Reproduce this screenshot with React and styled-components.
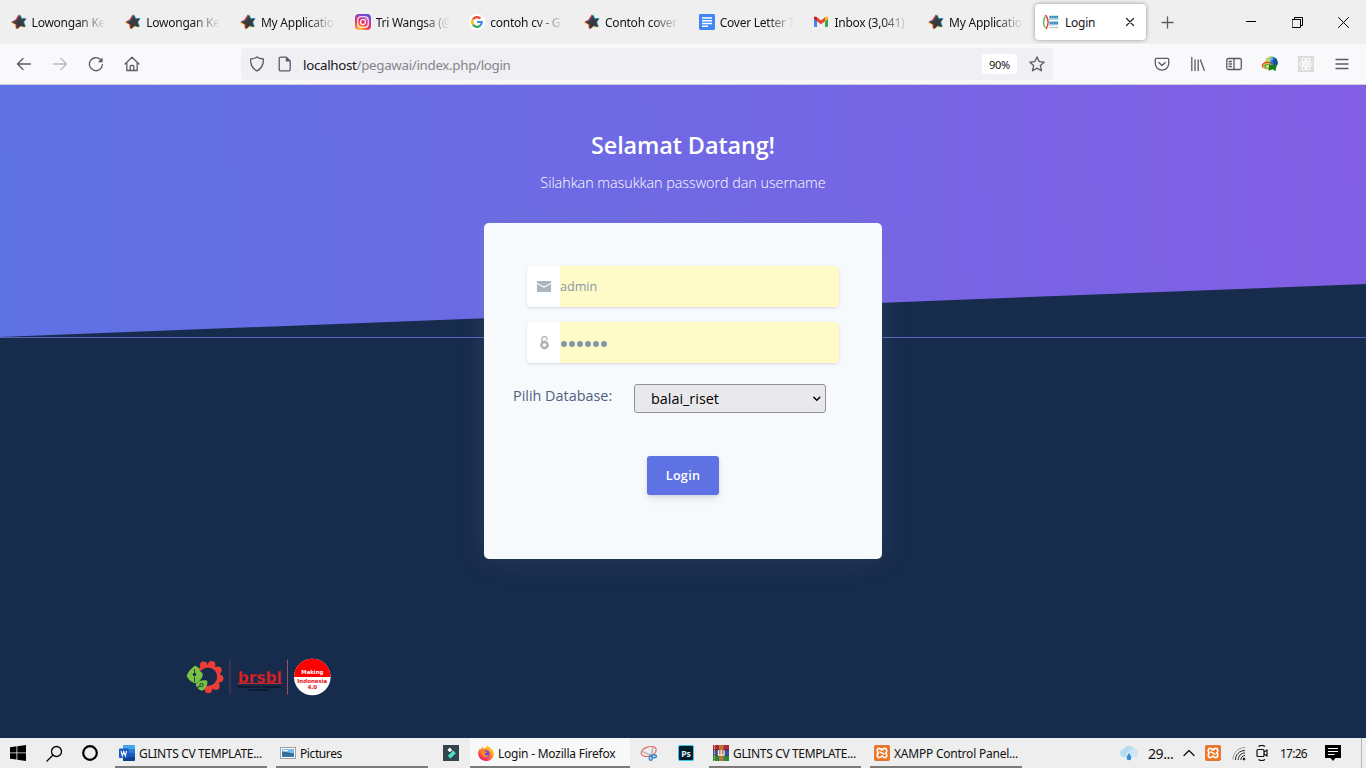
import React from 'react';
import styled, { createGlobalStyle, css } from 'styled-components';

const Global = createGlobalStyle`
  * { box-sizing: border-box; }
  body { margin: 0; overflow: hidden; background: #172b4d; font-family: "Open Sans", "Noto Sans", sans-serif; }
  svg { display: block; flex: none; }
`;

const ui = '"Noto Sans", "Open Sans", sans-serif';

const Screen = styled.div`
  width: 1366px;
  height: 768px;
  display: flex;
  flex-direction: column;
`;

/* ---------- browser chrome ---------- */

const TabBar = styled.div`
  height: 44px;
  flex: none;
  display: flex;
  align-items: center;
  background: #efefef;
  font-family: ${ui};
  font-size: 12px;
  color: #15141a;
`;

const Tab = styled.div`
  width: 114.7px;
  flex: none;
  height: 36px;
  display: flex;
  align-items: center;
  gap: 5px;
  padding-left: 10.6px;
`;

const TabLabel = styled.span`
  width: 86px;
  white-space: nowrap;
  line-height: 18px;
  padding-top: 1px;
  letter-spacing: ${(p) => p.$spacing || 0}px;
  mask-image: linear-gradient(to right, #000 56%, transparent 89%);
`;

const ActiveTab = styled(Tab)`
  width: 111px;
  margin-left: 2.7px;
  padding: 0 10px 0 8px;
  gap: 6px;
  background: #fff;
  border-radius: 4px;
  box-shadow: 0 0 4px rgba(0, 0, 0, 0.38);
`;

const ActiveLabel = styled.span`
  flex: 1;
  line-height: 18px;
  padding-top: 1px;
  letter-spacing: -0.2px;
`;

const WindowButton = styled.div`
  width: ${(p) => p.$w || 46}px;
  height: 44px;
  display: grid;
  place-items: center;
`;

const Spacer = styled.div`
  flex: 1;
`;

const Toolbar = styled.div`
  height: 41px;
  flex: none;
  display: flex;
  align-items: center;
  padding: 0 6px;
  background: #f9f9fb;
  border-bottom: 1px solid #ccccd2;
`;

const ToolButton = styled.div`
  width: 36px;
  height: 32px;
  display: grid;
  place-items: center;
  opacity: ${(p) => (p.$dim ? 0.4 : 1)};
`;

const AddressBar = styled.div`
  width: 812px;
  height: 32px;
  margin-left: 91px;
  display: flex;
  align-items: center;
  padding: 0 8px;
  background: #f0eff4;
  border-radius: 4px;
  font-family: ${ui};
`;

const PageInfo = styled.span`
  margin-left: 12px;
`;

const Url = styled.div`
  flex: 1;
  margin-left: 10px;
  padding-top: 1px;
  font-size: 13.33px;
  line-height: 20px;
  letter-spacing: -0.31px;
  color: #85848b;
  b { font-weight: 400; color: #15141a; }
`;

const ZoomBadge = styled.div`
  width: 35px;
  height: 20px;
  margin-right: 12px;
  display: grid;
  place-items: center;
  background: #fff;
  border-radius: 3px;
  font-size: 11px;
  letter-spacing: -0.3px;
  color: #15141a;
`;

/* ---------- login page ---------- */

const Page = styled.main`
  flex: 1;
  min-height: 0;
  display: flex;
  flex-direction: column;
  align-items: center;
  background: #172b4d;
`;

const Hero = styled.header`
  position: relative;
  width: 100%;
  height: 253px;
  flex: none;
  margin-bottom: -115px;
  padding-top: 43px;
  text-align: center;
  color: #fff;
  border-bottom: 1px solid #5960b8;
  &::before {
    content: "";
    position: absolute;
    inset: 0;
    background: linear-gradient(87deg, #5e72e4 0, #825ee4 100%);
    clip-path: polygon(0 0, 100% 0, 100% 199px, 0 100%);
  }
`;

const Title = styled.h1`
  position: relative;
  margin: 0;
  font-size: 23.4px;
  line-height: 34px;
  font-weight: 600;
  letter-spacing: -0.1px;
`;

const Lead = styled.p`
  position: relative;
  margin: 9px 0 0;
  font-size: 14.4px;
  line-height: 24px;
  font-weight: 300;
  letter-spacing: -0.04px;
  color: #fff;
`;

const Card = styled.form`
  position: relative;
  width: 398px;
  height: 336px;
  flex: none;
  display: flex;
  flex-direction: column;
  padding: 43px 43px 0;
  background: #f7fafc;
  border-radius: 5px;
  box-shadow: 0 0 29px rgba(136, 152, 170, 0.15);
`;

const Field = styled.div`
  height: 41px;
  margin-bottom: 15px;
  display: flex;
  border-radius: 4px;
  overflow: hidden;
  box-shadow: 0 1px 3px rgba(50, 50, 93, 0.18);
`;

const FieldIcon = styled.div`
  width: 33px;
  padding-left: 1px;
  display: grid;
  place-items: center;
  background: #fff;
`;

const FieldValue = styled.div`
  flex: 1;
  display: flex;
  align-items: center;
  gap: 2px;
  background: #fffbc8;
  font-size: 12.6px;
  color: #8898aa;
`;

const Dot = styled.i`
  width: 6px;
  height: 6px;
  margin: 2px -1px 0 1px;
  border-radius: 50%;
  background: #8898aa;
`;

const DatabaseRow = styled.div`
  display: flex;
  align-items: flex-start;
  margin: 6px -30px 0 -14px;
  font-size: 14.4px;
`;

const DatabaseLabel = styled.label`
  width: 121px;
  line-height: 24px;
  color: #525f7f;
`;

const Select = styled.div`
  width: 192px;
  height: 29px;
  display: flex;
  align-items: center;
  justify-content: space-between;
  padding: 0 4px 0 16px;
  color: #000;
  background: #e9e9ed;
  border: 1px solid #8f8f9d;
  border-radius: 3px;
`;

const LoginButton = styled.button`
  align-self: center;
  width: 72px;
  height: 39px;
  margin-top: 43px;
  padding: 0;
  border: 0;
  border-radius: 3px;
  background: #5e72e4;
  color: #fff;
  font: 600 12.6px "Open Sans", sans-serif;
  letter-spacing: 0.3px;
  box-shadow: 0 4px 6px rgba(50, 50, 93, 0.11), 0 1px 3px rgba(0, 0, 0, 0.08);
`;

const Footer = styled.footer`
  align-self: flex-start;
  margin: 99px 0 0 186px;
`;

/* ---------- taskbar ---------- */

const Taskbar = styled.div`
  height: 30px;
  flex: none;
  display: flex;
  align-items: center;
  background: #eee;
  font-family: ${ui};
  font-size: 12px;
  color: #111;
`;

const TaskIcon = styled.div`
  width: ${(p) => p.$w || 36}px;
  display: grid;
  place-items: center;
`;

const Task = styled.div`
  width: ${(p) => p.$w || 152}px;
  height: 30px;
  margin-left: ${(p) => p.$gap || 0}px;
  display: flex;
  align-items: center;
  gap: 4px;
  padding-left: ${(p) => p.$pad || 4}px;
  white-space: nowrap;
  letter-spacing: ${(p) => p.$spacing || 0}px;
  border-bottom: 2px solid #7b7b7b;
  border-top: 2px solid transparent;
  ${(p) => p.$active && css`background: #f8f8f8;`}
`;

const Weather = styled.span`
  width: 35px;
  padding-left: 9px;
  font-size: 14px;
  letter-spacing: -0.4px;
`;

const Clock = styled.span`
  width: 46px;
  padding-left: 12px;
  font-size: 12px;
  letter-spacing: -0.75px;
`;

const DesktopEdge = styled.div`
  width: 5px;
  height: 30px;
  margin-left: 9px;
  border-left: 1px solid #b5b5b5;
`;

/* ---------- drawings ---------- */

const Line = ({ size = 16, children, color = '#5b5b66', w = 1.3, vb = 16 }) => (
  <svg width={size} height={size} viewBox={`0 0 ${vb} ${vb}`} fill="none" stroke={color} strokeWidth={w} strokeLinecap="round" strokeLinejoin="round">
    {children}
  </svg>
);

const starPoints = '8.6,0.8 10.5,4.8 15,4.5 12.5,8.3 14.3,13 9.6,12 5.8,15.2 5.3,10.4 1,8.3 5.4,6';
const Star = () => (
  <svg width="16" height="16" viewBox="0 0 16 16">
    <polygon points={starPoints} fill="#ffd51f" transform="translate(-.7 .6)" />
    <polygon points={starPoints} fill="#ee2b36" transform="translate(-.9 -.4)" />
    <polygon points={starPoints} fill="#12b5e5" transform="translate(.6 -.5)" />
    <polygon points={starPoints} fill="#3b3a3e" stroke="#3b3a3e" strokeWidth=".5" transform="translate(.8 .8) scale(.92)" />
  </svg>
);

const Instagram = () => (
  <svg width="16" height="16" viewBox="0 0 16 16">
    <defs>
      <radialGradient id="ig" cx=".28" cy="1.05" r="1.1">
        <stop offset="0" stopColor="#fd5" /><stop offset=".25" stopColor="#fb8a3c" />
        <stop offset=".55" stopColor="#e8355f" /><stop offset=".8" stopColor="#b936b4" /><stop offset="1" stopColor="#5a4fdc" />
      </radialGradient>
    </defs>
    <rect width="16" height="16" rx="4" fill="url(#ig)" />
    <rect x="2.8" y="2.8" width="10.4" height="10.4" rx="3" fill="none" stroke="#fff" strokeWidth="1.1" />
    <circle cx="8" cy="8" r="2.5" fill="none" stroke="#fff" strokeWidth="1.1" />
    <circle cx="11" cy="5" r=".7" fill="#fff" />
  </svg>
);

const Google = () => (
  <svg width="16" height="16" viewBox="0 0 16 16">
    <circle cx="8" cy="8" r="8" fill="#fff" />
    <g fill="none" strokeWidth="2.2">
      <path d="M4 5.3A4.8 4.8 0 0 1 11.4 4.6" stroke="#ea4335" />
      <path d="M4 5.3a4.8 4.8 0 0 0 0 5.4" stroke="#fbbc05" />
      <path d="M4 10.7a4.8 4.8 0 0 0 7.2.9" stroke="#34a853" />
      <path d="M8 8h4.8a4.8 4.8 0 0 1-1.6 3.6" stroke="#4285f4" />
    </g>
  </svg>
);

const Docs = () => (
  <svg width="16" height="16" viewBox="0 0 16 16">
    <rect width="16" height="16" rx="1.4" fill="#4285f4" />
    <path d="M3 4h10M3 6.8h10M3 9.5h10M3 12.2h6" stroke="#fff" strokeWidth="1.4" />
  </svg>
);

const Gmail = () => (
  <svg width="16" height="16" viewBox="0 0 16 16">
    <path d="M1 4l3 2v7H2a1 1 0 0 1-1-1z" fill="#4285f4" />
    <path d="M12 6l3-2v8a1 1 0 0 1-1 1h-2z" fill="#34a853" />
    <path d="M4 3.2L8 6.4l4-3.2v4L8 10.2 4 7.2z" fill="#ea4335" />
    <path d="M1 4c0-1.8 1.8-2 3-.8v4L1 5z" fill="#c5221f" />
    <path d="M15 4c0-1.8-1.8-2-3-.8v4L15 5z" fill="#fbbc04" />
  </svg>
);

const SiteIcon = () => (
  <svg width="16" height="16" viewBox="0 0 16 16">
    <path d="M2.2 2.8C.9 4.5.6 6 .6 8s.4 4 1.8 5.5" fill="none" stroke="#5cb85c" strokeWidth="1.4" />
    <path d="M2.3 1C4.300 3 5.100 5 5.100 8S4.500 13 3 15" fill="none" stroke="#ee3b35" strokeWidth="1.4" />
    <path d="M6.4 3.2h9M6.4 9h9" stroke="#3a8ac0" strokeWidth="2.8" strokeDasharray="2 .25" />
    <path d="M6 5.4h9.5M6 11h9" stroke="#8ec0df" strokeWidth=".8" />
    <path d="M6 13.5h9.5" stroke="#aaa" strokeWidth=".8" />
  </svg>
);

const Idm = () => (
  <svg width="18" height="16" viewBox="0 0 18 16">
    <circle cx="10.5" cy="6.8" r="6.3" fill="#2574cf" />
    <path d="M5 4C6.5 1 9.500 0 12 .8L10.500 3.500 8 7 4.800 6.500z" fill="#c9d84c" />
    <path d="M8.500 2.500l2.500-1.200 1 2L9.500 6z" fill="#5fb0f0" />
    <path d="M12 4.500l2.500-2.200c2 1.700 2.600 4 1.800 6.500L13 9z" fill="#174e92" />
    <ellipse cx="6" cy="9.500" rx="5.200" ry="3.700" fill="#d94420" />
    <ellipse cx="6.300" cy="9.900" rx="4.300" ry="2.900" fill="#f5c53a" />
    <ellipse cx="6.600" cy="10.200" rx="3.300" ry="2.100" fill="#54a833" />
    <ellipse cx="7" cy="10.500" rx="2" ry="1.200" fill="#eee" />
    <path d="M8 8.500l3 .8 4.800-1-1.300 6.900-2.700-2-4.300 1.500z" fill="#16810f" />
  </svg>
);

const ReactBadge = () => (
  <svg width="16" height="16" viewBox="0 0 16 16">
    <rect width="16" height="16" fill="#dcdcdc" />
    <g fill="none" stroke="#fff" strokeWidth="1">
      <ellipse cx="8" cy="8" rx="6.5" ry="2.5" />
      <ellipse cx="8" cy="8" rx="6.5" ry="2.5" transform="rotate(60 8 8)" />
      <ellipse cx="8" cy="8" rx="6.5" ry="2.5" transform="rotate(120 8 8)" />
    </g>
    <circle cx="8" cy="8" r="1.4" fill="#fff" />
  </svg>
);

const Xampp = () => (
  <svg width="16" height="16" viewBox="0 0 16 16">
    <rect x=".3" y=".3" width="15.4" height="15.4" rx="1.8" fill="#f07422" stroke="#c9601c" strokeWidth=".6" />
    <g fill="none" stroke="#fff" strokeWidth="1.7" strokeLinejoin="round">
      <path d="M8 5.400C7.300 4 6.400 3.400 5.200 3.400 3 3.400 2.600 6.600 4.300 8 2.600 9.400 3 12.600 5.200 12.600c1.200 0 2.100-.6 2.800-2" />
      <path d="M8 5.400C8.700 4 9.600 3.400 10.800 3.400c2.200 0 2.600 3.200.9 4.600 1.700 1.400 1.300 4.600-.9 4.600-1.200 0-2.100-.6-2.800-2" />
      <path d="M5.800 6.200c.2 2.200 4.200 1.400 4.400 3.600" strokeWidth="1.500" />
    </g>
  </svg>
);

const Word = () => (
  <svg width="16" height="16" viewBox="0 0 16 16">
    <path d="M4 0h11a1 1 0 0 1 1 1v4H4z" fill="#41a5ee" />
    <path d="M4 4h12v4H4z" fill="#2b7cd3" />
    <path d="M4 8h12v4H4z" fill="#185abd" />
    <path d="M4 12h12v3a1 1 0 0 1-1 1H4z" fill="#103f91" />
    <rect y="3.5" width="9.6" height="9.6" rx="1" fill="#185abd" />
    <path d="M2 5.8l1.3 5L4.8 6.4l1.5 4.4 1.3-5" fill="none" stroke="#fff" strokeWidth="1.1" />
  </svg>
);

const Picture = () => (
  <svg width="16" height="16" viewBox="0 0 16 16">
    <rect x=".5" y="2.5" width="15" height="11" fill="#fff" stroke="#a0a0a0" />
    <rect x="2" y="4" width="12" height="8" fill="#79b9ee" />
    <path d="M2 7c3-1.5 6 2 12 1v4H2z" fill="#336e86" />
    <path d="M2 10l12-.5V12H2z" fill="#3872b4" />
    <path d="M3 5.6h5" stroke="#fff" strokeWidth="1.3" />
  </svg>
);

const Filmora = () => (
  <svg width="16" height="16" viewBox="0 0 16 16">
    <rect width="16" height="16" fill="#33444f" />
    <path d="M6.8 2.6l2.4 2.3-2.4 2.3-2.3-2.3z" fill="#fff" />
    <path d="M9.9 5.3l3 3-5.4 5.3-2.8-2.8 2.9-2.6z" fill="#4be0c1" />
  </svg>
);

const Firefox = () => (
  <svg width="16" height="16" viewBox="0 0 16 16">
    <defs>
      <linearGradient id="ff" x1=".9" y1="0" x2=".2" y2="1">
        <stop offset="0" stopColor="#ffec44" /><stop offset=".4" stopColor="#ff9a1f" /><stop offset=".75" stopColor="#ff4050" /><stop offset="1" stopColor="#e31587" />
      </linearGradient>
    </defs>
    <path d="M9.5 0c.3 2 4.4 3 5.8 6.2C17 11 13.6 16 8 16 3.200 16 .2 12.600.2 8.600c0-2.300.9-3.800 1.800-5l.6 1.100C3.600 3.300 4.200 2.500 4.500 1.600c.6.8 1 1.300 1.200 2.100C7.500 3.400 9 2 9.500 0z" fill="url(#ff)" />
    <circle cx="8" cy="9" r="3.7" fill="#7542e5" />
    <path d="M3 6.300c1.500-1 3.600-.6 4.700.3L9 7c-.5 1.200-2 1-2.300 2 .2 1.600 2.400 2 4.300.8-1 3-4.600 3.400-6.500 1.200C3.200 9.600 2.800 8 3 6.300z" fill="#ff8a1c" />
  </svg>
);

const Snip = () => (
  <svg width="18" height="17" viewBox="0 0 18 17" fill="none">
    <ellipse cx="8.7" cy="6.5" rx="7.8" ry="4.6" transform="rotate(-18 8.7 6.5)" stroke="#e66b66" strokeWidth="1.2" />
    <path d="M2 6.5l10 4M13 2l-2 9" stroke="#b9b9bd" strokeWidth="1.6" />
    <ellipse cx="10.8" cy="13" rx="1.5" ry="2.3" stroke="#3286cb" strokeWidth="1.4" />
    <ellipse cx="14" cy="11.3" rx="2.3" ry="1.5" stroke="#3286cb" strokeWidth="1.4" />
  </svg>
);

const PsBox = styled.div`
  width: 16px;
  height: 16px;
  display: grid;
  place-items: center;
  border: 1px solid #31c5f0;
  border-radius: 2px;
  background: #001d26;
  color: #e4f8ff;
  font: 700 8.5px "Open Sans", sans-serif;
`;

const Winrar = () => (
  <svg width="16" height="16" viewBox="0 0 16 16">
    <path d="M0 0h16v5H0z" fill="#b0273f" />
    <path d="M0 5h16v5.500H0z" fill="#3c50b0" />
    <path d="M0 10.500h16V16H0z" fill="#268a3c" />
    <path d="M0 5h16M0 10.500h16" stroke="#232" strokeWidth=".7" />
    <path d="M1.500 0v16" stroke="#e5c343" strokeWidth="1" strokeDasharray="1.5 1" />
    <rect x="6" width="4.5" height="16" fill="#bd7535" />
    <path d="M5.500 5.200v5h5.500v-5M8.200 5v4.500" fill="none" stroke="#f7f3e0" strokeWidth="1.3" />
  </svg>
);

const Windows = () => (
  <svg width="16" height="16" viewBox="0 0 16 16">
    <path d="M0 2.200l6.500-.9v6.200H0zM7.300 1.200L16 0v7.500H7.300zM0 8.300h6.500v6.300L0 13.700zM7.300 8.300H16V16l-8.700-1.200z" fill="#000" />
  </svg>
);

const Cloud = () => (
  <svg width="20" height="17" viewBox="0 0 20 17">
    <path d="M4.500 12a4 4 0 0 1 .3-7.900 5.500 5.500 0 0 1 10-.3A4.200 4.200 0 0 1 16 12z" fill="#b6dcf4" />
    <path d="M9 12a3 3 0 0 1 1-5.700 4 4 0 0 1 6-1.500 3.700 3.700 0 0 1 .5 7.200z" fill="#cfe4f4" />
    <path d="M10 8c1.300 2 2.300 3.400 2.300 4.900a2.300 2.300 0 0 1-4.600 0C7.700 11.400 8.700 10 10 8z" fill="#318fdc" />
  </svg>
);

const Wifi = () => (
  <svg width="14" height="16" viewBox="0 0 14 16" fill="none" stroke="#222" strokeWidth="1">
    <path d="M1 14.5C1 8 6 2.500 13 2.500" stroke="#999" />
    <path d="M3.500 15C3.500 9.500 7.500 5.500 13 5.500" />
    <path d="M6.200 15c0-4 3-7 6.800-7" />
    <path d="M8.800 15c0-2.500 2-4.500 4.200-4.500" />
    <circle cx="12" cy="14" r="1" fill="#222" />
  </svg>
);

const Meet = () => (
  <svg width="12" height="16" viewBox="0 0 12 16" fill="none" stroke="#111" strokeWidth="1.2">
    <rect x="1" y="4.5" width="7" height="7" rx="1" />
    <path d="M8 7l3-2v6L8 9M2.500 1.500c2-1.500 4.500-1.500 6.500 0M2.500 14.500c2 1.500 4.500 1.500 6.500 0" />
  </svg>
);

const Notice = () => (
  <svg width="16" height="16" viewBox="0 0 16 16">
    <path d="M0 0h16v13h-5.500L8 16l-2.500-3H0z" fill="#000" />
    <path d="M3 3.500h10M3 6.500h10M3 9.500h6.500" stroke="#fff" strokeWidth="1" />
  </svg>
);

const Mail = () => (
  <svg width="14" height="11" viewBox="0 0 14 11" fill="#adb5bd">
    <path d="M0 0h14v1.800L7 5.600 0 1.800z" />
    <path d="M0 3l7 3.800L14 3v8H0z" />
  </svg>
);

const Lock = () => (
  <svg width="9" height="14" viewBox="0 0 9 14" fill="none">
    <circle cx="4.5" cy="9" r="3.1" stroke="#adb5bd" strokeWidth="2.6" />
    <path d="M1.800 6.500V3.200a2.600 2.600 0 0 1 5.300 0V4" stroke="#adb5bd" strokeWidth="1.3" />
  </svg>
);

const gearTeeth = [-112, -72, -32, 8, 48, 88];
const Partners = () => (
  <svg width="146" height="40" viewBox="0 0 146 40">
    <circle cx="22" cy="19" r="12.6" fill="#ee3d37" />
    {gearTeeth.map((a) => {
      const r = (a * Math.PI) / 180;
      return <circle key={a} cx={22 + 11.8 * Math.cos(r)} cy={18.8 + 12.6 * Math.sin(r)} r="3.7" fill="#ee3d37" />;
    })}
    <circle cx="22" cy="18.8" r="9.2" fill="#172b4d" />
    <path d="M0 12l8-5 11 11-1 12-4 6H0z" fill="#172b4d" />
    <path d="M8.800 7.800C12 8.500 14 11 14 13.500c2 .5 3 2 2.800 4-1 3.500-3.500 6-6.800 8C6 24.500 2.500 22 .6 18 2 14 5 10.500 8.800 7.800z" fill="#7ac143" />
    <path d="M8.500 11v5M8.500 19v5" stroke="#172b4d" strokeWidth=".8" />
    <circle cx="8.500" cy="16.500" r="1.7" fill="#172b4d" />
    <path d="M9.700 26.500c2.500-3.500 6.800-5 11.600-3.700.5 4.200-1.500 8.700-5.300 10-3-.6-5.300-2.800-6.300-6.300z" fill="#7ac143" />
    <circle cx="15.500" cy="27" r="1.700" fill="none" stroke="#172b4d" strokeWidth=".9" />
    <path d="M10 30.500l4-2.500" stroke="#172b4d" strokeWidth="1" />
    <path d="M44 1.500V36.500" stroke="#6a3b50" strokeWidth="1" />
    <text x="51.8" y="24.700" fontFamily="DejaVu Sans, sans-serif" fontWeight="700" fontSize="15.5" textLength="44" lengthAdjust="spacingAndGlyphs" fill="#e02228" stroke="#542129" strokeWidth=".4">brsbl</text>
    <path d="M52 25.500h44" stroke="#c92a2e" strokeWidth="1" />
    <path d="M52 29h43M63 32h20" stroke="#0c1425" strokeWidth="1.4" strokeDasharray="2 .4" />
    <path d="M101.500 1.500V36.500" stroke="#97545b" strokeWidth="1" />
    <circle cx="126.300" cy="19" r="18.3" fill="#fff" />
    <path d="M108 19a18.300 18.300 0 0 1 36.600 0z" fill="#fe0000" />
    <g fontFamily="DejaVu Sans, sans-serif" fontWeight="700" fontSize="5.5" textAnchor="middle">
      <text x="126.300" y="15.500" fill="#fff" textLength="22" lengthAdjust="spacingAndGlyphs">Making</text>
      <text x="126.300" y="24.700" fill="#e80e12" textLength="30" lengthAdjust="spacingAndGlyphs">Indonesia</text>
      <text x="126.300" y="31" fill="#e80e12">4.0</text>
    </g>
  </svg>
);

const tabs = [
  [Star, 'Lowongan Ke'],
  [Star, 'Lowongan Ke'],
  [Star, 'My Applicatio'],
  [Instagram, 'Tri Wangsa (@'],
  [Google, 'contoh cv - G'],
  [Star, 'Contoh cover'],
  [Docs, 'Cover Letter T'],
  [Gmail, 'Inbox (3,041) -'],
  [Star, 'My Applicatio'],
];

export default function App() {
  return (
    <Screen>
      <Global />
      <TabBar>
        {tabs.map(([Icon, label], i) => (
          <Tab key={i}>
            <Icon />
            <TabLabel $spacing={-0.25}>{label}</TabLabel>
          </Tab>
        ))}
        <ActiveTab>
          <SiteIcon />
          <ActiveLabel>Login</ActiveLabel>
          <Line size={12} vb={12} color="#222" w={1.2}><path d="M2.500 2.500l7 7M9.500 2.500l-7 7" /></Line>
        </ActiveTab>
        <WindowButton $w={43}>
          <Line size={13} vb={13}><path d="M6.500 1v11M1 6.500h11" /></Line>
        </WindowButton>
        <Spacer />
        <WindowButton><Line size={10} vb={10} color="#000" w={1}><path d="M0 4.500h10" /></Line></WindowButton>
        <WindowButton><Line size={11} vb={11} color="#000" w={1}><path d="M.5 2.500h8v8h-8zM2.500 2.500v-2h8v8h-2" /></Line></WindowButton>
        <WindowButton><Line size={11} vb={11} color="#000" w={1}><path d="M.5.5l10 10M10.500.5l-10 10" /></Line></WindowButton>
      </TabBar>

      <Toolbar>
        <ToolButton><Line><path d="M1.500 8h13M7 2.500L1.500 8 7 13.500" /></Line></ToolButton>
        <ToolButton $dim><Line><path d="M1.500 8h13M9 2.500L14.500 8 9 13.500" /></Line></ToolButton>
        <ToolButton>
          <Line>
            <path d="M14.400 8.500a6.500 6.500 0 1 1-2-5" />
            <path d="M14.600 1.500v4.800H9.800z" fill="#5b5b66" stroke="none" />
          </Line>
        </ToolButton>
        <ToolButton>
          <Line><path d="M1 8l7-6.800L15 8M2.800 7v7.500h10.400V7M6.200 14.300V10.500a1 1 0 0 1 1-1h1.600a1 1 0 0 1 1 1v3.800" /></Line>
        </ToolButton>
        <AddressBar>
          <Line><path d="M8 1C6.300 2.300 4 2.800 1.700 3c-.4 5 1.800 9.500 6.300 12 4.500-2.500 6.700-7 6.300-12C12 2.800 9.700 2.300 8 1z" /></Line>
          <PageInfo>
            <Line>
              <path d="M3.500 1.200h5.800L13.200 5v8.500a1.300 1.300 0 0 1-1.300 1.300H3.500a1.300 1.300 0 0 1-1.300-1.300v-11a1.300 1.300 0 0 1 1.300-1.300z" />
              <path d="M8.800 1l4.600 4.600H8.800z" fill="#5b5b66" stroke="none" />
            </Line>
          </PageInfo>
          <Url><b>localhost</b>/pegawai/index.php/login</Url>
          <ZoomBadge>90%</ZoomBadge>
          <Line><path d="M8 .9l2.100 4.700 5.100.5-3.800 3.500 1.100 5.200L8 12.100l-4.500 2.700 1.100-5.200L.8 6.100l5.100-.5z" /></Line>
        </AddressBar>
        <Spacer />
        <ToolButton><Line><path d="M2.500 2.300h11a1.200 1.200 0 0 1 1.200 1.200v4a6.700 6.700 0 0 1-13.400 0v-4a1.200 1.200 0 0 1 1.200-1.200zM4.800 6.500L8 9.500l3.200-3" /></Line></ToolButton>
        <ToolButton><Line><path d="M1.800 1.500v13M5 4v10.500M8.200 4v10.500M10.500 4l3.800 10.500" /></Line></ToolButton>
        <ToolButton><Line><rect x=".8" y="2.5" width="14.5" height="11" rx="1.5" /><path d="M8 2.500v11M3 5.500h2.500M3 8h2.500M3 10.500h2.500" /></Line></ToolButton>
        <ToolButton><Idm /></ToolButton>
        <ToolButton><ReactBadge /></ToolButton>
        <ToolButton><Line><path d="M2 3.500h12M2 8h12M2 12.500h12" /></Line></ToolButton>
      </Toolbar>

      <Page>
        <Hero>
          <Title>Selamat Datang!</Title>
          <Lead>Silahkan masukkan password dan username</Lead>
        </Hero>
        <Card>
          <Field>
            <FieldIcon><Mail /></FieldIcon>
            <FieldValue>admin</FieldValue>
          </Field>
          <Field>
            <FieldIcon><Lock /></FieldIcon>
            <FieldValue>{Array.from({ length: 6 }, (_, i) => <Dot key={i} />)}</FieldValue>
          </Field>
          <DatabaseRow>
            <DatabaseLabel>Pilih Database:</DatabaseLabel>
            <Select>
              balai_riset
              <Line size={9} vb={9} color="#000" w={1.5}><path d="M1.800 3.200l3 3 3-3" /></Line>
            </Select>
          </DatabaseRow>
          <LoginButton type="button">Login</LoginButton>
        </Card>
        <Footer><Partners /></Footer>
      </Page>

      <Taskbar>
        <TaskIcon><Windows /></TaskIcon>
        <TaskIcon><Line size={17} vb={17} color="#000" w={1.3}><circle cx="10.5" cy="6.5" r="5" /><path d="M7 10l-6 6" /></Line></TaskIcon>
        <TaskIcon><Line color="#000" w={2.2}><circle cx="8" cy="8" r="6.8" /></Line></TaskIcon>
        <Task $gap={7} $spacing={-0.35}><Word />GLINTS CV TEMPLATE...</Task>
        <Task $gap={9} $spacing={-0.4}><Picture />Pictures</Task>
        <TaskIcon $w={46}><Filmora /></TaskIcon>
        <Task $w={160} $gap={-4} $pad={8} $active $spacing={-0.23}><Firefox />Login - Mozilla Firefox</Task>
        <TaskIcon $w={38}><Snip /></TaskIcon>
        <TaskIcon><PsBox>Ps</PsBox></TaskIcon>
        <Task $gap={5} $spacing={-0.35}><Winrar />GLINTS CV TEMPLATE...</Task>
        <Task $gap={9} $spacing={-0.22}><Xampp />XAMPP Control Panel...</Task>
        <Spacer />
        <Cloud />
        <Weather>29...</Weather>
        <TaskIcon $w={30}><Line size={12} vb={12} color="#111"><path d="M1 8.500l5-5 5 5" /></Line></TaskIcon>
        <TaskIcon $w={18}><Xampp /></TaskIcon>
        <TaskIcon $w={34}><Wifi /></TaskIcon>
        <TaskIcon $w={12}><Meet /></TaskIcon>
        <Clock>17:26</Clock>
        <TaskIcon $w={38}><Notice /></TaskIcon>
        <DesktopEdge />
      </Taskbar>
    </Screen>
  );
}
